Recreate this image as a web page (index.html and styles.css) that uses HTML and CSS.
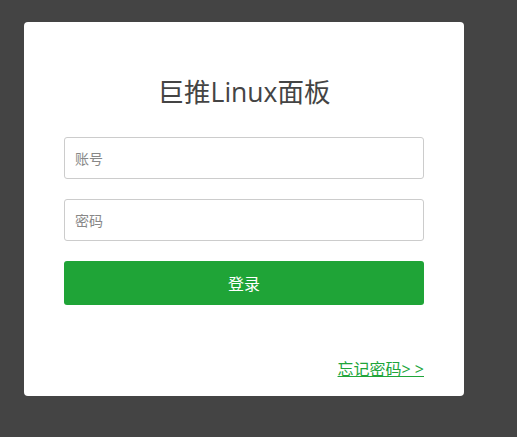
FILE: index.html
```html
<!DOCTYPE html>
<html lang="zh-CN">
<head>
<meta charset="utf-8">
<title>巨推Linux面板</title>
<link rel="stylesheet" href="styles.css">
</head>
<body>
<div class="card">
  <h1 class="title">巨推Linux面板</h1>
  <form class="form">
    <input class="field" type="text" placeholder="账号">
    <input class="field" type="password" placeholder="密码">
    <button class="btn" type="button">登录</button>
  </form>
  <div class="foot"><a class="forgot" href="#">忘记密码&gt; &gt;</a></div>
</div>
</body>
</html>
```

FILE: styles.css
```css
html, body {
  margin: 0;
  padding: 0;
  background: #444444;
  height: 100%;
}
body {
  font-family: "Open Sans", "Noto Sans CJK SC", sans-serif;
  padding-top: 22px;
  padding-left: 24px;
  box-sizing: border-box;
}
.card {
  width: 440px;
  height: 374px;
  box-sizing: border-box;
  background: #fff;
  border-radius: 4px;
  padding: 52px 40px 16px;
  display: flex;
  flex-direction: column;
}
.title {
  margin: 0;
  font-weight: normal;
  font-size: 26.5px;
  line-height: 36px;
  color: #444;
  text-align: center;
  font-family: "Open Sans", "Noto Sans CJK SC", sans-serif;
}
.form {
  display: flex;
  flex-direction: column;
  margin-top: 27px;
}
.field {
  height: 42px;
  box-sizing: border-box;
  border: 1px solid #ccc;
  border-radius: 3px;
  padding: 0 10px;
  font-size: 14px;
  font-family: "Open Sans", "Noto Sans CJK SC", sans-serif;
  color: #555;
  margin-bottom: 20px;
  outline: none;
}
.field::placeholder {
  color: #888;
}
.btn {
  height: 44px;
  border: none;
  border-radius: 3px;
  background: #1fa437;
  color: #fff;
  font-size: 16px;
  font-family: "Open Sans", "Noto Sans CJK SC", sans-serif;
}
.foot {
  margin-top: auto;
  text-align: right;
  line-height: 22px;
}
.forgot {
  color: #20a53a;
  font-size: 16px;
  text-decoration: underline;
  font-family: "Open Sans", "Noto Sans CJK SC", sans-serif;
}
```
